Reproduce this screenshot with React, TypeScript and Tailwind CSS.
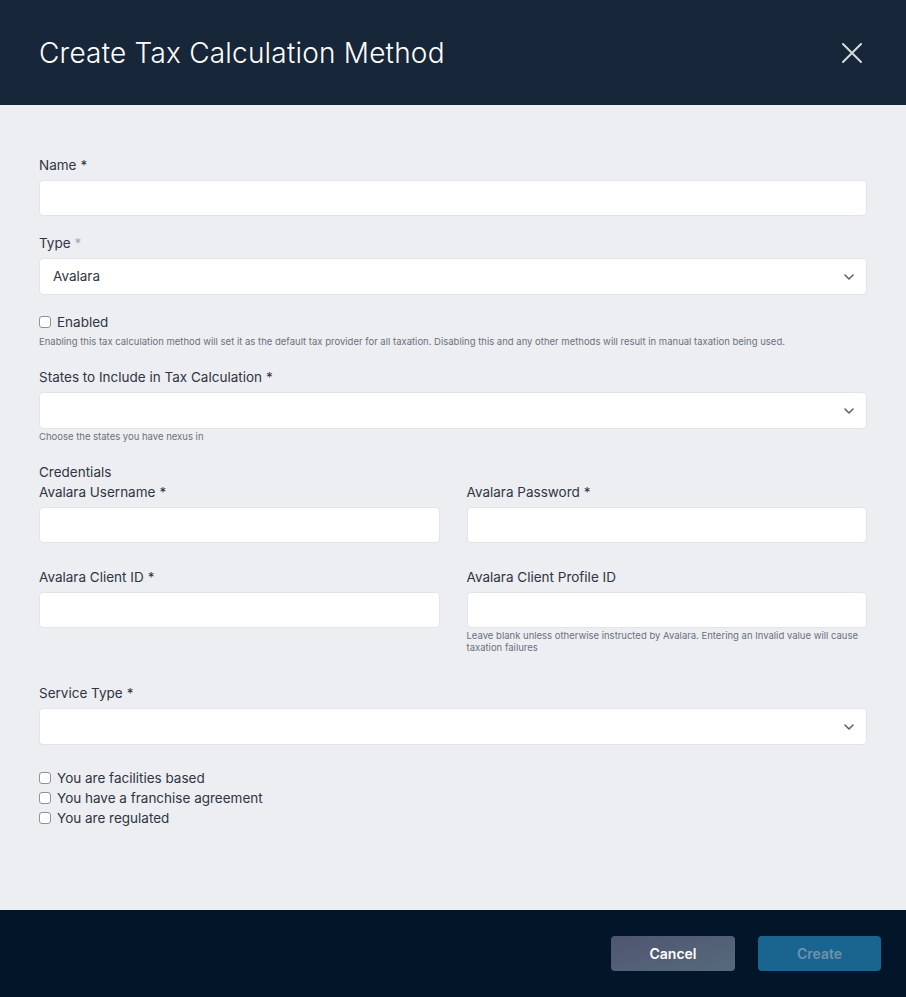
import { ReactNode } from 'react';

const font = { fontFamily: 'Inter, "Noto Sans", sans-serif' };

const Label = ({ children, star = true, faint = false }: { children: ReactNode; star?: boolean; faint?: boolean }) => (
  <div className="h-5 text-[13.5px] leading-5 text-[#2f3542]">
    {children}
    {star && <span className={faint ? 'ml-1 text-[#a3a8b3]' : 'ml-1 text-[#2f3542]'}>*</span>}
  </div>
);

const Input = () => (
  <div className="mt-[5px] h-9 rounded-[4px] border border-[#e1e4e9] bg-white" />
);

const Select = ({ value }: { value?: string }) => (
  <div className="mt-[5px] flex h-[37px] items-center justify-between rounded-[4px] border border-[#e1e4e9] bg-white pl-[13px] pr-[12px]">
    <span className="text-[13.5px] text-[#2f3542]">{value}</span>
    <svg width="10" height="6" viewBox="0 0 10 6" fill="none">
      <path d="M1 1l4 4 4-4" stroke="#5b6270" strokeWidth="1.6" strokeLinecap="round" strokeLinejoin="round" />
    </svg>
  </div>
);

const Check = ({ label }: { label: string }) => (
  <div className="flex h-5 items-center gap-[6px]">
    <span className="h-3 w-3 rounded-[3px] border border-[#8d929c] bg-white" />
    <span className="text-[13.5px] leading-5 text-[#2f3542]">{label}</span>
  </div>
);

const Help = ({ children }: { children: ReactNode }) => (
  <p className="text-[9.5px] leading-3 text-[#6b717c]">{children}</p>
);

export default function App() {
  return (
    <div className="flex h-[997px] w-[906px] flex-col bg-[#eceef2]" style={font}>
      <div className="flex h-[105px] shrink-0 items-center justify-between bg-[#172638] pl-[39px] pr-[44px]">
        <h1 className="text-[28px] font-light tracking-[0.2px] text-white">Create Tax Calculation Method</h1>
        <svg width="20" height="20" viewBox="0 0 20 20" fill="none">
          <path d="M1 1l18 18M19 1L1 19" stroke="#d6d9de" strokeWidth="2" strokeLinecap="round" />
        </svg>
      </div>

      <div className="flex-1 px-[39px] pt-[50px]">
        <Label>Name</Label>
        <Input />

        <div className="mt-[17px]">
          <Label faint>Type</Label>
          <Select value="Avalara" />
        </div>

        <div className="mt-[17px]">
          <Check label="Enabled" />
          <div className="mt-1">
            <Help>
              Enabling this tax calculation method will set it as the default tax provider for all taxation. Disabling this and any other methods will result in manual taxation being used.
            </Help>
          </div>
        </div>

        <div className="mt-[19px]">
          <Label>States to Include in Tax Calculation</Label>
          <Select />
          <div className="mt-[2px]">
            <Help>Choose the states you have nexus in</Help>
          </div>
        </div>

        <div className="mt-[19px]">
          <div className="h-5 text-[13.5px] leading-5 text-[#2f3542]">Credentials</div>
          <div className="grid grid-cols-2 gap-x-[27px] gap-y-[24px]">
            <div>
              <Label>Avalara Username</Label>
              <Input />
            </div>
            <div>
              <Label>Avalara Password</Label>
              <Input />
            </div>
            <div>
              <Label>Avalara Client ID</Label>
              <Input />
            </div>
            <div>
              <Label star={false}>Avalara Client Profile ID</Label>
              <Input />
              <div className="mt-[2px]">
                <Help>
                  Leave blank unless otherwise instructed by Avalara. Entering an Invalid value will cause taxation failures
                </Help>
              </div>
            </div>
          </div>
        </div>

        <div className="mt-[29px]">
          <Label>Service Type</Label>
          <Select />
        </div>

        <div className="mt-[23px] flex flex-col">
          <Check label="You are facilities based" />
          <Check label="You have a franchise agreement" />
          <Check label="You are regulated" />
        </div>
      </div>

      <div className="flex h-[87px] shrink-0 items-center justify-end gap-[23px] bg-[#031629] pr-[25px]">
        <button className="h-[35px] w-[124px] rounded-[4px] bg-gradient-to-br from-[#4f5570] to-[#566a7c] text-[14px] font-semibold text-white">
          Cancel
        </button>
        <button className="h-[35px] w-[123px] rounded-[4px] bg-[#1a6590] text-[14px] font-semibold text-[#6f93ac]">
          Create
        </button>
      </div>
    </div>
  );
}
